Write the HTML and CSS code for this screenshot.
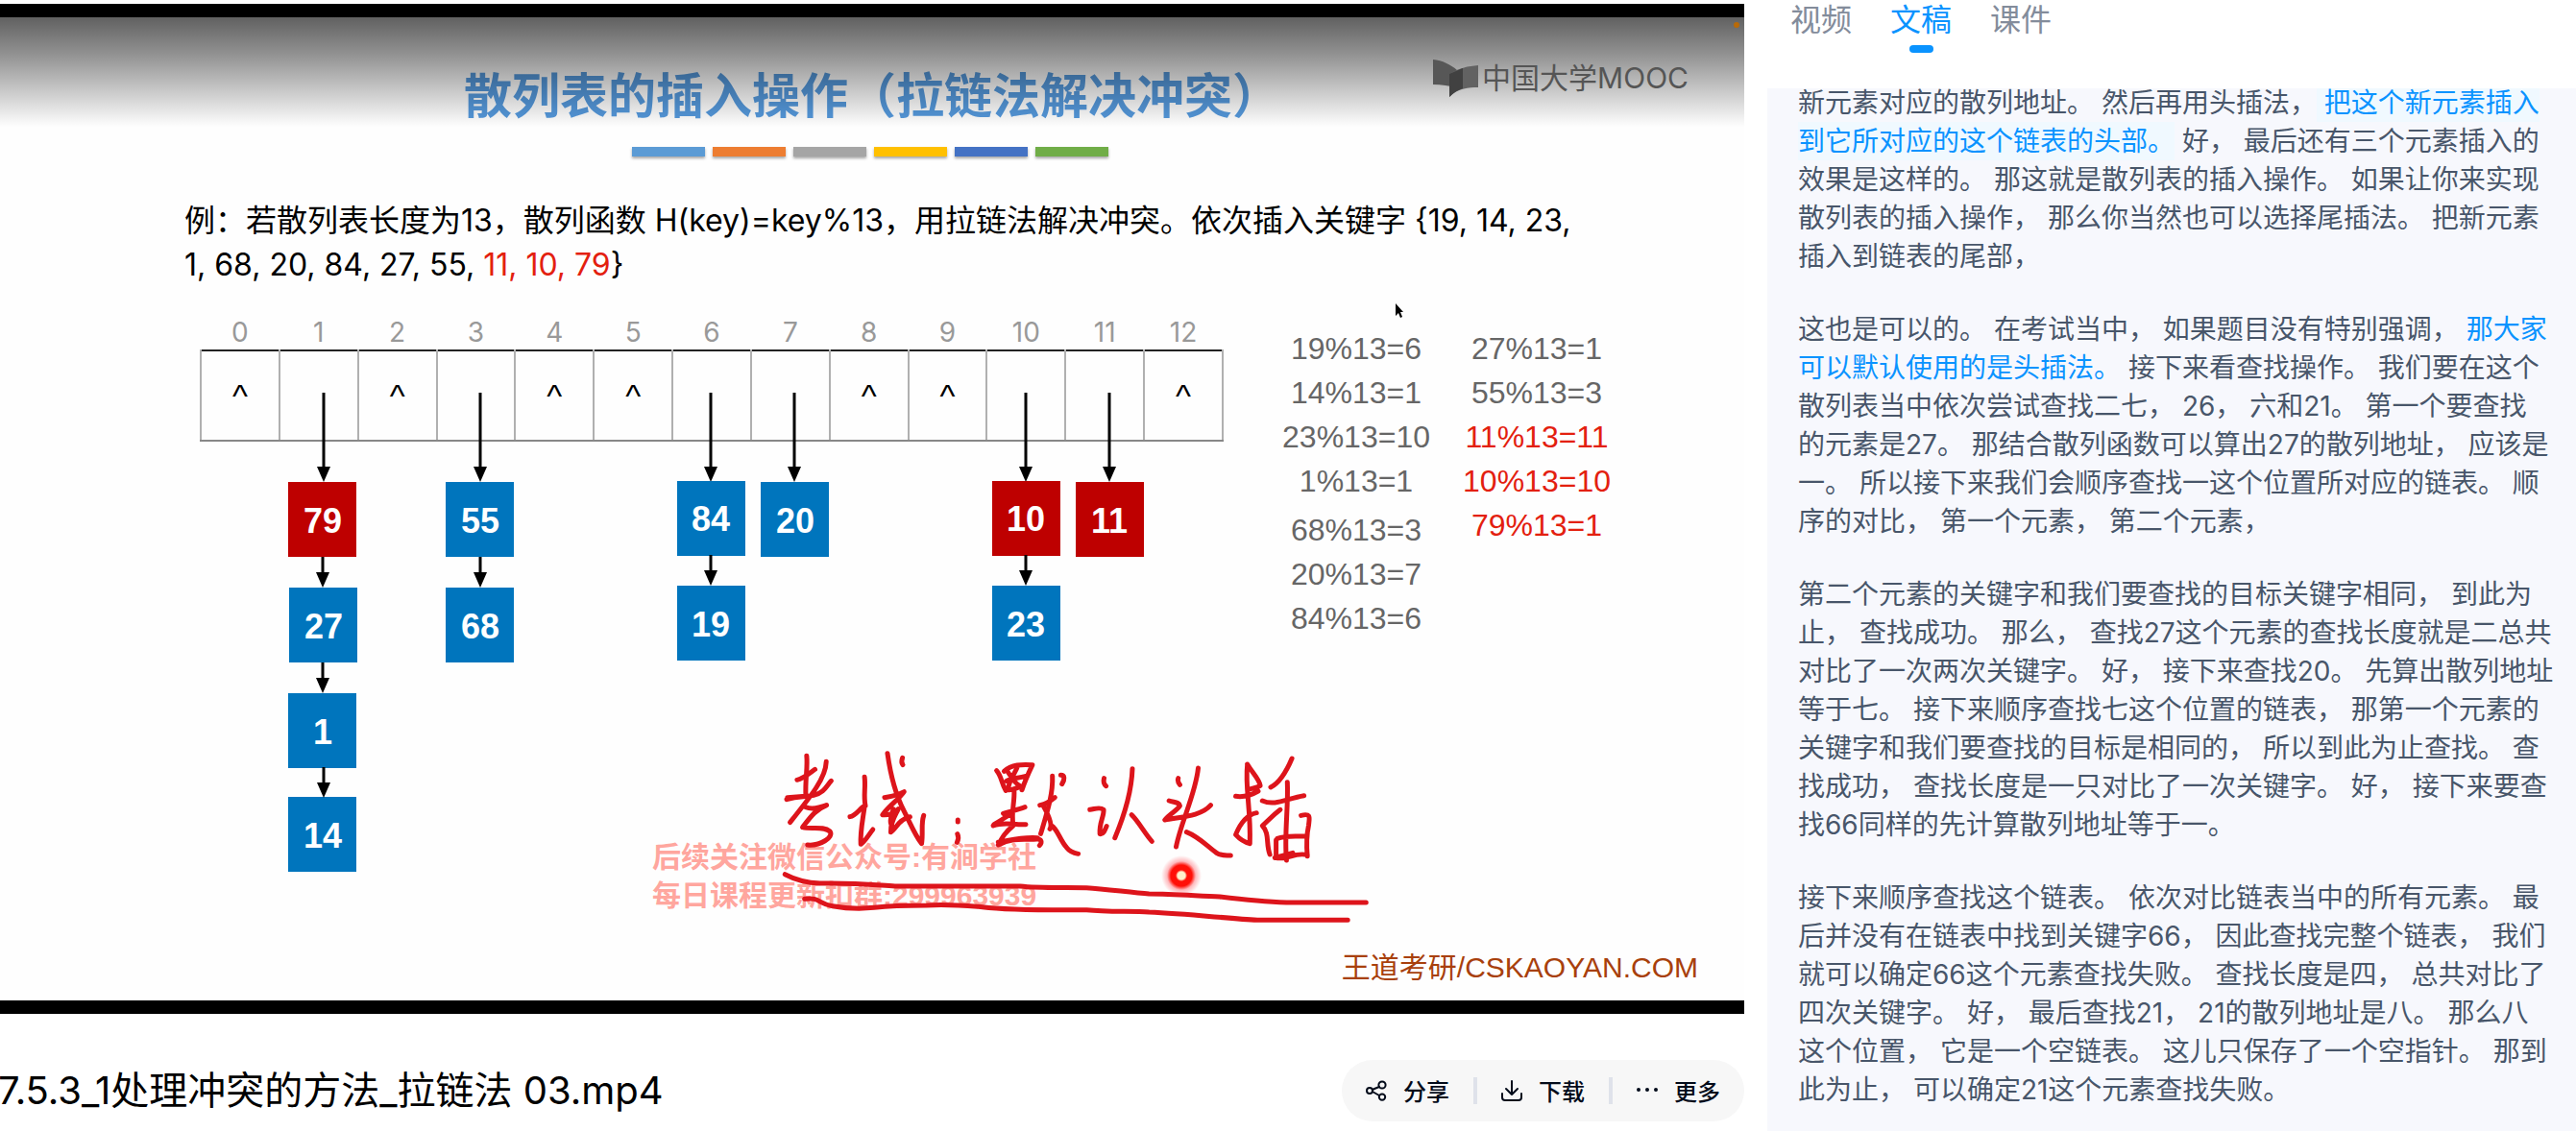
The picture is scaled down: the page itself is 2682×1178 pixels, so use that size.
FILE: index.html
```html
<!DOCTYPE html>
<html lang="zh-CN">
<head>
<meta charset="utf-8">
<title>7.5.3_1处理冲突的方法_拉链法 03.mp4</title>
<link rel="stylesheet" href="styles.css">
</head>
<body>
<div class="layout">
  <main class="player">
    <section class="video">
      <div class="slide">
        <h1 class="slide-title">散列表的插入操作（拉链法解决冲突）</h1>
        <div class="stripes"><i class="s1"></i><i class="s2"></i><i class="s3"></i><i class="s4"></i><i class="s5"></i><i class="s6"></i></div>
        <p class="problem">例：若散列表长度为13，散列函数 H(key)=key%13，用拉链法解决冲突。依次插入关键字 {19, 14, 23,<br>1, 68, 20, 84, 27, 55, <span class="red">11, 10, 79</span>}</p>
        <div class="work">
          <div class="diagram">
            <table class="buckets">
              <thead><tr><th>0</th><th>1</th><th>2</th><th>3</th><th>4</th><th>5</th><th>6</th><th>7</th><th>8</th><th>9</th><th>10</th><th>11</th><th>12</th></tr></thead>
              <tbody><tr><td>^</td><td></td><td>^</td><td></td><td>^</td><td>^</td><td></td><td></td><td>^</td><td>^</td><td></td><td></td><td>^</td></tr></tbody>
            </table>
            <svg class="chains" viewBox="208 327 1066 582">
              <defs>
                <g id="long"><path class="shaft" d="M0 409V490"/><path d="M-7 486H7L0 502Z"/></g>
                <g id="short"><path class="shaft" d="M0 0V20"/><path d="M-7 16H7L0 32Z"/></g>
              </defs>
              <use href="#long" x="337"/><use href="#long" x="500"/><use href="#long" x="740"/><use href="#long" x="827"/><use href="#long" x="1068"/><use href="#long" x="1155"/>
              <g class="node new"><rect x="300" y="502" width="71" height="78"/><text x="336" y="555">79</text></g>
              <g class="node"><rect x="301" y="612" width="71" height="78"/><text x="337" y="665">27</text></g>
              <g class="node"><rect x="300" y="722" width="71" height="78"/><text x="336" y="775">1</text></g>
              <g class="node"><rect x="300" y="830" width="71" height="78"/><text x="336" y="883">14</text></g>
              <g class="node"><rect x="464" y="502" width="71" height="78"/><text x="500" y="555">55</text></g>
              <g class="node"><rect x="464" y="612" width="71" height="78"/><text x="500" y="665">68</text></g>
              <g class="node"><rect x="705" y="501" width="71" height="78"/><text x="740" y="553">84</text></g>
              <g class="node"><rect x="705" y="610" width="71" height="78"/><text x="740" y="663">19</text></g>
              <g class="node"><rect x="792" y="502" width="71" height="78"/><text x="828" y="555">20</text></g>
              <g class="node new"><rect x="1033" y="501" width="71" height="78"/><text x="1068" y="553">10</text></g>
              <g class="node"><rect x="1033" y="610" width="71" height="78"/><text x="1068" y="663">23</text></g>
              <g class="node new"><rect x="1120" y="502" width="71" height="78"/><text x="1155" y="555">11</text></g>
              <use href="#short" x="336" y="580"/><use href="#short" x="336" y="690"/><use href="#short" x="337" y="799"/>
              <use href="#short" x="500" y="580"/><use href="#short" x="740" y="578"/><use href="#short" x="1068" y="578"/>
            </svg>
          </div>
          <div class="sums">
            <ul class="sum-list">
              <li>19%13=6</li><li>14%13=1</li><li>23%13=10</li><li>1%13=1</li>
              <li class="group">68%13=3</li><li>20%13=7</li><li>84%13=6</li>
            </ul>
            <ul class="sum-list">
              <li>27%13=1</li><li>55%13=3</li><li class="red">11%13=11</li><li class="red">10%13=10</li><li class="red">79%13=1</li>
            </ul>
          </div>
        </div>
        <p class="credit">王道考研/CSKAOYAN.COM</p>

        <p class="watermark">后续关注微信公众号:有涧学社<br>每日课程更新扣群:299963939</p>
        <svg class="ink" viewBox="0 0 1568 660" preserveAspectRatio="none" aria-label="考试：默认头插">
          <path d="M138 82C141 120 134 155 136 208M115 157C130 153 145 136 158 124M185 100C184 150 150 205 98 290M90 218C120 205 130 212 155 205S186 175 197 160M92 212L135 208M136 242C150 250 165 246 186 236C160 250 150 268 128 305C150 312 178 300 194 318C204 336 170 364 140 360"/>
          <path d="M277 148C280 180 274 205 279 238C268 240 258 268 242 272M277 240C273 280 266 320 268 358C278 350 286 330 297 312"/>
          <path d="M332 74C338 130 350 200 372 255C386 290 398 330 414 356C418 320 412 295 419 268M368 88C366 95 364 102 369 110M325 212C342 208 356 206 372 194C358 220 340 232 320 266C335 268 350 260 358 248C350 270 340 285 340 320C352 312 358 280 386 272M346 248C342 270 334 288 345 305"/>
          <path d="M501 282V288M500 326C503 334 503 342 499 352"/>
          <path d="M594 128C606 145 606 170 616 190M612 130C630 108 655 108 680 110C672 132 662 160 655 188M618 160C630 150 645 152 662 146M618 126C635 160 640 170 655 180M645 112C640 135 626 150 622 182M616 186C632 194 640 180 655 178M636 190C638 225 628 260 634 298M610 262C625 256 645 250 662 242M586 300C615 285 640 300 664 296M588 296C602 285 620 270 630 262M634 300C615 320 608 335 598 360C635 335 660 345 690 342C702 340 704 352 697 362M598 352C630 345 650 335 692 338"/>
          <path d="M728 145C730 200 715 260 700 325M698 236C712 232 722 225 734 212M706 238C722 275 728 298 722 310M726 300C740 310 746 345 762 368C770 382 778 385 790 388M748 142C758 142 758 155 751 170"/>
          <path d="M852 152C850 162 851 170 857 176M818 250C830 248 842 240 851 250C852 272 840 290 842 326C850 328 854 315 858 302M920 122C918 200 900 270 878 338M918 266C934 285 950 325 967 349"/>
          <path d="M1030 152C1028 160 1030 166 1034 172M1008 222C1022 228 1032 226 1034 238C1028 252 1010 262 998 282C1040 272 1085 270 1108 236M1078 120C1072 200 1036 290 1025 366M1050 320C1080 335 1100 365 1122 385C1132 394 1142 392 1156 393"/>
          <path d="M1196 108C1208 135 1225 155 1227 175C1218 182 1212 182 1204 185M1196 110C1190 180 1205 250 1202 356M1168 208C1190 212 1205 205 1222 192M1218 260C1198 265 1180 290 1168 328C1180 345 1190 352 1202 356"/>
          <path d="M1303 90C1290 130 1275 165 1252 180M1232 222C1262 240 1290 215 1332 206M1292 164C1295 240 1284 330 1290 408M1275 250C1255 270 1245 285 1232 300C1250 325 1240 355 1250 390M1325 268C1350 260 1345 275 1343 300C1338 330 1338 365 1340 395M1268 340C1290 330 1310 335 1338 332M1265 345V400C1285 410 1315 380 1340 392M1262 400L1305 385"/>
          <path d="M86 452C105 465 130 478 170 480C260 478 300 485 350 489H650C700 496 760 492 810 494C860 498 920 510 960 513C1020 513 1080 520 1130 522C1180 530 1240 538 1290 540H1481"/>
          <path d="M133 529C170 522 165 545 200 551C230 558 270 560 300 556C340 550 380 549 425 549C480 545 520 550 560 554C620 564 700 564 810 563C860 570 920 566 960 570C1050 575 1150 590 1220 595H1437"/>
        </svg>
        <i class="laser"></i>
        <svg class="cursor" viewBox="0 0 10 18"><path d="M1 1V14L4 11L6 16L8 15L6 10H9Z"/></svg>
        <i class="shade"></i>
        <div class="mooc">
          <svg viewBox="0 0 47 39"><path fill="#575757" d="M0 0C10 1 18 5 25 11V30C17 27 9 26 0 26Z"/><path fill="#626262" d="M17 15C26 9 36 7 47 6V29C35 29 25 31 17 39Z"/><path fill="#414141" d="M17 15L31 9V30C25 32 21 35 17 39Z"/></svg>
          <span>中国大学MOOC</span>
        </div>
        <i class="status"></i>
      </div>
    </section>
    <footer class="toolbar">
      <h2 class="file-name">7.5.3_1处理冲突的方法_拉链法 03.mp4</h2>
      <div class="actions">
        <button type="button"><svg viewBox="0 0 22 22"><circle cx="4" cy="11" r="3"/><circle cx="17" cy="5" r="3.6"/><circle cx="17" cy="17.600" r="3.200"/><path d="M7 10L9 9L14 7M7 12L14 16"/></svg>分享</button>
        <button type="button"><svg viewBox="0 0 22 22"><path d="M11 1V15M5 9L11 15L17 9M1 14V18Q1 21 4 21H18Q21 21 21 18V14"/></svg>下载</button>
        <button type="button"><svg class="dots" viewBox="0 0 22 22"><circle cx="2" cy="10" r="2"/><circle cx="11" cy="10" r="2"/><circle cx="20" cy="10" r="2"/></svg>更多</button>
      </div>
    </footer>
  </main>
  <aside class="side">
    <nav class="tabs"><a href="#video">视频</a><a href="#script" class="active" aria-current="page">文稿</a><a href="#slides">课件</a></nav>
    <div class="panel">
      <article class="transcript" id="script">
        <p>新元素对应的散列地址。 然后再用头插法，<mark> 把这个新元素插入<br>到它所对应的这个链表的头部。</mark> 好， 最后还有三个元素插入的<br>效果是这样的。 那这就是散列表的插入操作。 如果让你来实现<br>散列表的插入操作， 那么你当然也可以选择尾插法。 把新元素<br>插入到链表的尾部，</p>
        <p>这也是可以的。 在考试当中， 如果题目没有特别强调， <span class="key">那大家<br>可以默认使用的是头插法。</span> 接下来看查找操作。 我们要在这个<br>散列表当中依次尝试查找二七， 26， 六和21。 第一个要查找<br>的元素是27。 那结合散列函数可以算出27的散列地址， 应该是<br>一。 所以接下来我们会顺序查找一这个位置所对应的链表。 顺<br>序的对比， 第一个元素， 第二个元素，</p>
        <p>第二个元素的关键字和我们要查找的目标关键字相同， 到此为<br>止， 查找成功。 那么， 查找27这个元素的查找长度就是二总共<br>对比了一次两次关键字。 好， 接下来查找20。 先算出散列地址<br>等于七。 接下来顺序查找七这个位置的链表， 那第一个元素的<br>关键字和我们要查找的目标是相同的， 所以到此为止查找。 查<br>找成功， 查找长度是一只对比了一次关键字。 好， 接下来要查<br>找66同样的先计算散列地址等于一。</p>
        <p>接下来顺序查找这个链表。 依次对比链表当中的所有元素。 最<br>后并没有在链表中找到关键字66， 因此查找完整个链表， 我们<br>就可以确定66这个元素查找失败。 查找长度是四， 总共对比了<br>四次关键字。 好， 最后查找21， 21的散列地址是八。 那么八<br>这个位置， 它是一个空链表。 这儿只保存了一个空指针。 那到<br>此为止， 可以确定21这个元素查找失败。</p>
      </article>
    </div>
  </aside>
</div>
</body>
</html>
```
FILE: styles.css
```css
* { box-sizing: border-box; }
body, h1, h2, p, ul { margin: 0; padding: 0; }
body {
  background: #fff;
  font-family: Inter, "Noto Sans CJK SC", sans-serif;
  color: #000;
  overflow-x: hidden;
}
.layout {
  display: grid;
  grid-template-columns: minmax(0, 1fr) 842px;
  column-gap: 24px;
  min-height: 100vh;
}

/* video frame and slide */
.video {
  margin-top: 4px;
  border-top: 14px solid #000;
  border-bottom: 14px solid #000;
  overflow: hidden;
}
.slide { position: relative; padding: 52px 48px 16px; background: #fefefe; }
.slide-title {
  font-size: 50px;
  line-height: 60px;
  font-weight: 700;
  text-align: center;
  color: #5599dc;
}
.stripes { display: flex; justify-content: center; gap: 8px; margin: 23px 4px 0 0; }
.stripes i { width: 76px; height: 10px; box-shadow: 0 2px 3px rgba(0, 0, 0, .35); }
.s1 { background: #5b9bd5; }
.s2 { background: #ed7d31; }
.s3 { background: #a5a5a5; }
.s4 { background: #ffc000; }
.s5 { background: #4472c4; }
.s6 { background: #70ad47; }
.problem { margin: 44px 0 0 144px; font-size: 32px; line-height: 46px; white-space: nowrap; }
.red { color: #e3200f; }

.work { display: flex; margin: 28px 0 0 160px; }
.diagram { position: relative; flex: none; width: 1066px; height: 582px; }
.buckets { width: 1066px; table-layout: fixed; border-collapse: collapse; text-align: center; }
.buckets th { height: 38px; padding: 0; font-size: 28px; line-height: 36px; font-weight: 400; color: #999; }
.buckets td {
  height: 94px;
  padding: 0;
  border: 2px solid #b0b0b0;
  border-top-color: #222;
  border-bottom-color: #888;
  font: 34px/36px "Liberation Sans", sans-serif;
}
.chains { position: absolute; inset: 0; width: 100%; height: 100%; }
.shaft { stroke: #000; stroke-width: 3; }
.node rect { fill: #0075bd; }
.node.new rect { fill: #be0000; }
.node text {
  fill: #fff;
  font: bold 36px "Liberation Sans", sans-serif;
  text-anchor: middle;
}
.sums { display: flex; gap: 38px; margin: 13px 0 0 63px; }
.sum-list {
  width: 150px;
  list-style: none;
  font: 32px/46px "Liberation Sans", sans-serif;
  color: #666;
  display: flex;
  flex-direction: column;
  align-items: center;
}
.sum-list .group { margin-top: 5px; }
.sum-list .red { color: #e3200f; }
.credit {
  margin: 81px 0 0;
  text-align: right;
  font: 30px/36px "Liberation Sans", "Noto Sans CJK SC", sans-serif;
  color: #a8400c;
}

/* layers over the slide */
.watermark {
  position: absolute;
  left: 679px;
  top: 855px;
  font: bold 30px/40px "Liberation Sans", "Noto Sans CJK SC", sans-serif;
  color: #ffa69e;
}
.ink { position: absolute; left: 780px; top: 742px; width: 680px; height: 220px; }
.ink path {
  fill: none;
  stroke: #dd141b;
  stroke-width: 5;
  stroke-linecap: round;
  stroke-linejoin: round;
  vector-effect: non-scaling-stroke;
}
.laser {
  position: absolute;
  left: 1208px;
  top: 872px;
  width: 44px;
  height: 44px;
  border-radius: 50%;
  background: radial-gradient(circle, #fff0cc 0 4px, #ff1008 6px 11px, rgba(255, 60, 70, .35) 15px, rgba(255, 120, 130, 0) 21px);
}
.cursor { position: absolute; left: 1452px; top: 297px; width: 10px; height: 18px; }
.cursor path { stroke: #fff; stroke-width: 1; paint-order: stroke; }
.shade {
  position: absolute;
  inset: 0 0 auto;
  height: 114px;
  background: linear-gradient(rgba(0, 0, 0, .62), rgba(0, 0, 0, .42) 35%, rgba(0, 0, 0, .16) 75%, rgba(0, 0, 0, 0));
}
.mooc {
  position: absolute;
  right: 58px;
  top: 44px;
  display: flex;
  gap: 4px;
  font-size: 30px;
  line-height: 38px;
  color: #555;
}
.mooc svg { width: 47px; height: 39px; }
.status { position: absolute; right: 5px; top: 5px; width: 6px; height: 6px; border-radius: 50%; background: #b86a08; }

/* file name and actions */
.toolbar { display: flex; align-items: center; justify-content: space-between; margin-top: 48px; }
.file-name { font-size: 40px; line-height: 56px; font-weight: 400; white-space: nowrap; margin-left: -2px; }
.actions { display: flex; align-items: center; height: 64px; border-radius: 32px; background: #f7f7f7; }
.actions button {
  display: flex;
  align-items: center;
  gap: 17px;
  height: 28px;
  padding: 0 25px;
  border: 0;
  background: none;
  font: 500 24px/28px "Noto Sans CJK SC", sans-serif;
  color: #030b1a;
}
.actions button + button { border-left: 4px solid #dfe2ea; }
.actions svg { width: 22px; height: 22px; fill: none; stroke: #030b1a; stroke-width: 2; stroke-linecap: round; stroke-linejoin: round; }
.actions .dots { fill: #030b1a; stroke: none; }

/* transcript column */
.side { display: flex; flex-direction: column; }
.tabs { display: flex; gap: 40px; height: 92px; padding: 1px 0 0 24px; }
.tabs a { font-size: 32px; line-height: 40px; color: #838c9b; text-decoration: none; }
.tabs .active { color: #0a93ff; }
.tabs .active::after { content: ""; display: block; width: 25px; height: 8px; margin: 6px auto 0; border-radius: 4px; background: #0a93ff; }
.panel { flex: 1; overflow: hidden; padding: 0 23px 24px 32px; background: #f7f8fd; }
.transcript { display: flex; flex-direction: column; gap: 36px; margin-top: -5px; font-size: 28px; line-height: 40px; color: #48566a; white-space: nowrap; }
.transcript mark { padding: 3px 0; background: #f0f9ff; color: #0a93ff; }
.key { color: #0a93ff; }
```
